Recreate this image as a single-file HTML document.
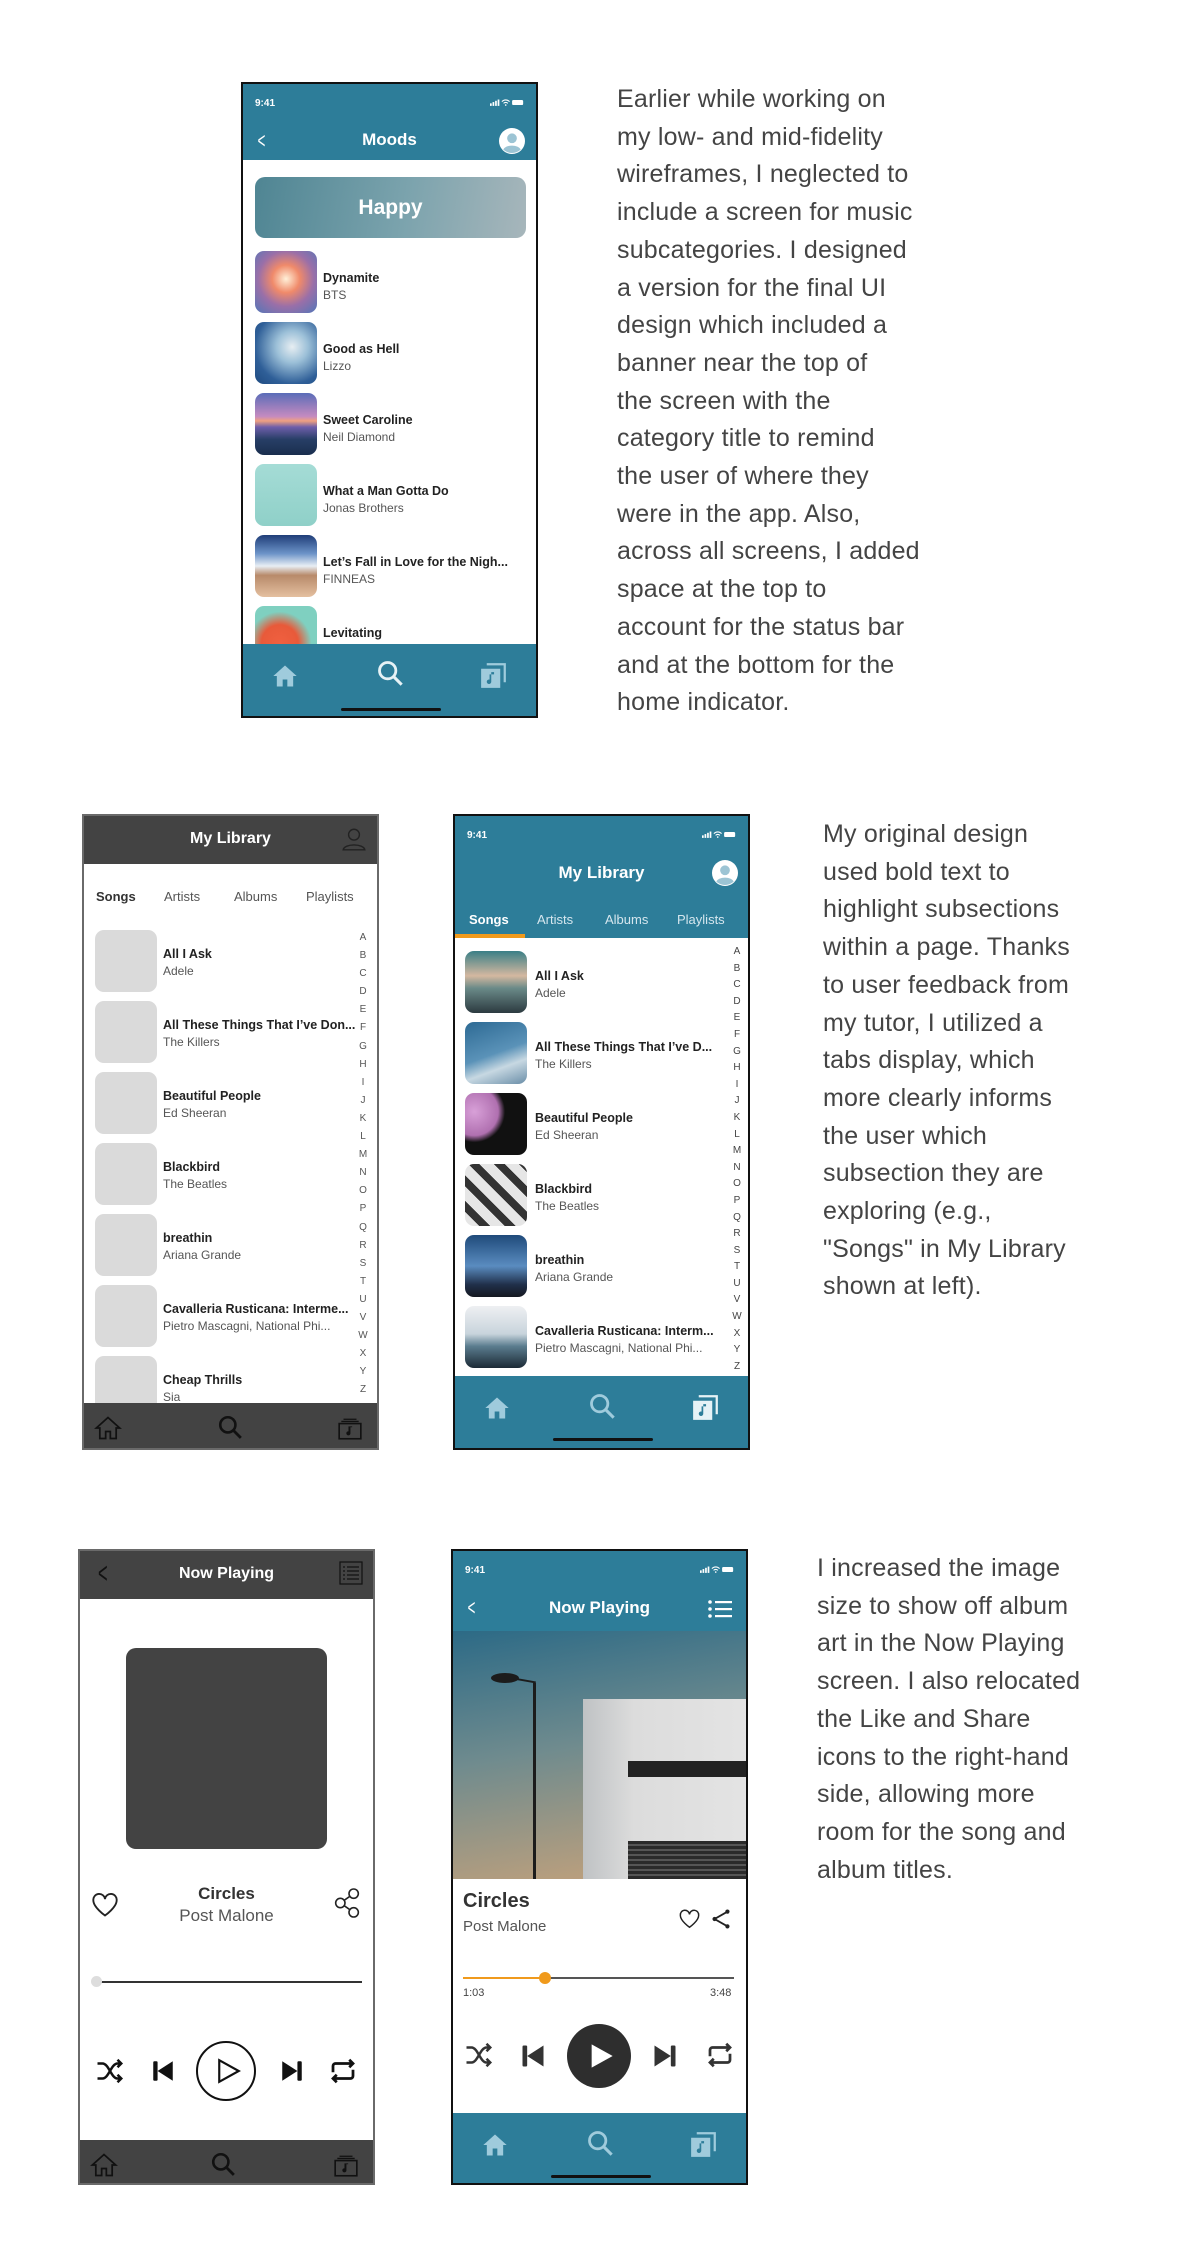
<!DOCTYPE html>
<html><head><meta charset="utf-8"><style>
*{margin:0;padding:0;box-sizing:border-box}
body{width:1200px;height:2264px;background:#fff;position:relative;font-family:"Liberation Sans",sans-serif;overflow:hidden}
.ph{position:absolute;width:297px;height:636px;overflow:hidden;background:#fff}
.hi{border:2px solid #111}
.wf{border:2px solid #6a6a6a}
.a{position:absolute}
.teal{background:#2d7d99}
.dark{background:#434343}
.st{font-size:10px;color:#fff;font-weight:bold}
.ttl{font-weight:bold;color:#fff;font-size:17px;text-align:center;width:100%}
.t1{font-weight:bold;font-size:12.5px;color:#222;white-space:nowrap}
.t2{font-size:12px;color:#555;white-space:nowrap;margin-top:3px}
.img{position:absolute;width:62px;height:62px;border-radius:9px}
.gimg{position:absolute;width:62px;height:62px;border-radius:9px;background:#dadada}
.txt{position:absolute;font-size:25px;line-height:37.7px;color:#444;letter-spacing:0.2px}
.alpha{position:absolute;font-size:10px;color:#555;text-align:center;width:12px}
.tab{position:absolute;font-size:13px}
</style></head><body>
<svg width="0" height="0" style="position:absolute">
<defs>
<symbol id="home" viewBox="0 0 24 24"><path d="M12 3L2 12h3v9h5v-6h4v6h5v-9h3z" fill="currentColor"/></symbol>
<symbol id="homeo" viewBox="0 0 24 24"><path d="M12 3L2 12h3v9h5v-6h4v6h5v-9h3z" fill="none" stroke="currentColor" stroke-width="1.5"/></symbol>
<symbol id="srch" viewBox="0 0 24 24"><circle cx="10" cy="10" r="7" fill="none" stroke="currentColor" stroke-width="2.4"/><path d="M15 15l7 7" stroke="currentColor" stroke-width="2.6"/></symbol>
<symbol id="lib" viewBox="0 0 24 24"><path d="M6 1h17v17h-2V3H6z" fill="currentColor"/><rect x="1" y="6" width="17" height="17" fill="currentColor"/><path d="M10 9v8.5a2 2 0 1 1-1.5-1.9V11h4V9z" fill="#2d7d99"/></symbol>
<symbol id="libo" viewBox="0 0 24 24"><rect x="2" y="7" width="20" height="14" fill="none" stroke="currentColor" stroke-width="1.5"/><path d="M4 5h16M6 3h12" stroke="currentColor" stroke-width="1.2"/><path d="M12 10v6a1.5 1.5 0 1 1-1-1.4V10h3" fill="currentColor" stroke="currentColor" stroke-width=".8"/></symbol>
<symbol id="user" viewBox="0 0 24 24"><circle cx="12" cy="12" r="12" fill="#fff"/><circle cx="12" cy="9.5" r="4.5" fill="#9cc4d4"/><path d="M4 20c2-5 14-5 16 0a12 12 0 0 1-16 0z" fill="#9cc4d4"/></symbol>
<symbol id="statr" viewBox="0 0 40 10"><rect x="0" y="6" width="2" height="3" fill="#fff"/><rect x="3" y="4.5" width="2" height="4.5" fill="#fff"/><rect x="6" y="3" width="2" height="6" fill="#fff"/><rect x="9" y="1.5" width="2" height="7.5" fill="#fff"/><path d="M14 4a6 6 0 0 1 9 0M16 6a3.5 3.5 0 0 1 5 0" stroke="#fff" stroke-width="1.3" fill="none"/><circle cx="18.5" cy="8" r="1" fill="#fff"/><rect x="26" y="2" width="13" height="6" rx="1.5" fill="#fff"/></symbol>
<symbol id="shuf" viewBox="0 0 24 24"><path d="M2 6h4c5 0 7 12 12 12h3M2 18h4c5 0 7-12 12-12h3M18 3l3 3-3 3M18 15l3 3-3 3" fill="none" stroke="currentColor" stroke-width="2"/></symbol>
<symbol id="prev" viewBox="0 0 24 24"><rect x="3" y="3" width="4" height="18" rx="1" fill="currentColor"/><path d="M21 3v18L7 12z" fill="currentColor"/></symbol>
<symbol id="next" viewBox="0 0 24 24"><rect x="17" y="3" width="4" height="18" rx="1" fill="currentColor"/><path d="M3 3v18l14-9z" fill="currentColor"/></symbol>
<symbol id="rep" viewBox="0 0 24 24"><path d="M4 13V8a2 2 0 0 1 2-2h14M20 11v5a2 2 0 0 1-2 2H4M17 3l3 3-3 3M7 15l-3 3 3 3" fill="none" stroke="currentColor" stroke-width="2.2"/></symbol>
<symbol id="heart" viewBox="0 0 24 24"><path d="M12 21S2 14 2 8a5 5 0 0 1 10-1 5 5 0 0 1 10 1c0 6-10 13-10 13z" fill="none" stroke="currentColor" stroke-width="1.6"/></symbol>
<symbol id="share" viewBox="0 0 24 24"><path d="M19 4L5 12l14 8" fill="none" stroke="currentColor" stroke-width="2"/><circle cx="19" cy="4" r="2.3" fill="currentColor"/><circle cx="5" cy="12" r="2.3" fill="currentColor"/><circle cx="19" cy="20" r="2.3" fill="currentColor"/></symbol>
<symbol id="shareo" viewBox="0 0 24 24"><path d="M17 5L7 12l10 7" fill="none" stroke="currentColor" stroke-width="1.2"/><circle cx="17" cy="5" r="3.5" fill="#fff" stroke="currentColor" stroke-width="1.2"/><circle cx="7" cy="12" r="3.5" fill="#fff" stroke="currentColor" stroke-width="1.2"/><circle cx="17" cy="19" r="3.5" fill="#fff" stroke="currentColor" stroke-width="1.2"/></symbol>
</defs></svg>

<!-- Phone 1 Moods -->
<div class="ph hi" style="left:241px;top:82px;height:636px">
 <div class="a teal" style="left:0;top:0;width:100%;height:76px"></div>
 <div class="a st" style="left:12px;top:14px">9:41</div>
 <svg class="a" style="right:12px;top:14px" width="34" height="9"><use href="#statr"/></svg>
 <div class="a ttl" style="top:46px;font-size:17px">Moods</div>
 <div class="a" style="left:12px;top:44px;color:#fff;font-size:22px;transform:scaleX(.6)">&lt;</div>
 <svg class="a" style="right:11px;top:44px" width="26" height="26"><use href="#user"/></svg>
 <div class="a" style="left:12px;top:93px;width:271px;height:61px;border-radius:10px;background:linear-gradient(100deg,#4f8593,#7ba3ad 55%,#a7b6bb);color:#fff;font-weight:bold;font-size:21px;text-align:center;line-height:61px">Happy</div>
 <div class="img" style="left:12px;top:167px;background:radial-gradient(circle at 50% 45%,#fff0d8,#f08a6a 30%,#9a6fa8 60%,#5276b8)"></div>
 <div class="a" style="left:80px;top:187px"><div class="t1">Dynamite</div><div class="t2">BTS</div></div>
 <div class="img" style="left:12px;top:238px;background:radial-gradient(circle at 60% 40%,#e7eef2,#9cc0d8 30%,#2f5f98 70%,#1e4a80)"></div>
 <div class="a" style="left:80px;top:258px"><div class="t1">Good as Hell</div><div class="t2">Lizzo</div></div>
 <div class="img" style="left:12px;top:309px;background:linear-gradient(#5a6cb8,#c58bc0 38%,#f0a080 45%,#6e5eaa 55%,#273e66 75%,#1a2e4e)"></div>
 <div class="a" style="left:80px;top:329px"><div class="t1">Sweet Caroline</div><div class="t2">Neil Diamond</div></div>
 <div class="img" style="left:12px;top:380px;background:linear-gradient(#a5dcd6,#8fd0c8)"></div>
 <div class="a" style="left:80px;top:400px"><div class="t1">What a Man Gotta Do</div><div class="t2">Jonas Brothers</div></div>
 <div class="img" style="left:12px;top:451px;background:linear-gradient(#1f3d78,#6c93c8 30%,#e8eef4 50%,#b88a6a 65%,#e4c0a0)"></div>
 <div class="a" style="left:80px;top:471px"><div class="t1">Let’s Fall in Love for the Nigh...</div><div class="t2">FINNEAS</div></div>
 <div class="img" style="left:12px;top:522px;background:radial-gradient(circle at 40% 60%,#f06040,#e85a3a 35%,#7fd0c0 60%)"></div>
 <div class="a" style="left:80px;top:542px"><div class="t1">Levitating</div><div class="t2">Dua Lipa</div></div>
 <div class="a teal" style="left:0;top:560px;width:100%;height:80px"></div>
 <svg class="a" style="left:28px;top:578px;color:#9fcbdc" width="28" height="28"><use href="#home"/></svg>
 <svg class="a" style="left:133px;top:575px;color:#e6f2f6" width="28" height="28"><use href="#srch"/></svg>
 <svg class="a" style="left:237px;top:578px;color:#9fcbdc" width="27" height="27"><use href="#lib"/></svg>
 <div class="a" style="left:98px;top:624px;width:100px;height:3px;border-radius:2px;background:#111"></div>
</div>
<div class="txt" style="left:617px;top:81px">Earlier while working on<br>my low- and mid-fidelity<br>wireframes, I neglected to<br>include a screen for music<br>subcategories. I designed<br>a version for the final UI<br>design which included a<br>banner near the top of<br>the screen with the<br>category title to remind<br>the user of where they<br>were in the app. Also,<br>across all screens, I added<br>space at the top to<br>account for the status bar<br>and at the bottom for the<br>home indicator.</div>

<!-- Phone 2 wireframe library -->
<div class="ph wf" style="left:82px;top:814px">
 <div class="a dark" style="left:0;top:0;width:100%;height:48px"></div>
 <div class="a ttl" style="top:14px;font-size:16px">My Library</div>
 <svg class="a" style="right:10px;top:10px" width="26" height="26" viewBox="0 0 24 24"><circle cx="12" cy="8" r="5" fill="none" stroke="#222" stroke-width="1.3"/><path d="M2 22c1-6 19-6 20 0z" fill="none" stroke="#222" stroke-width="1.3"/></svg>
 <div class="tab" style="left:12px;top:73px;font-weight:bold;color:#333">Songs</div>
 <div class="tab" style="left:80px;top:73px;color:#555">Artists</div>
 <div class="tab" style="left:150px;top:73px;color:#555">Albums</div>
 <div class="tab" style="left:222px;top:73px;color:#555">Playlists</div>
 <div class="gimg" style="left:11px;top:114px"></div><div class="a" style="left:79px;top:131px"><div class="t1">All I Ask</div><div class="t2">Adele</div></div>
 <div class="gimg" style="left:11px;top:185px"></div><div class="a" style="left:79px;top:202px"><div class="t1">All These Things That I’ve Don...</div><div class="t2">The Killers</div></div>
 <div class="gimg" style="left:11px;top:256px"></div><div class="a" style="left:79px;top:273px"><div class="t1">Beautiful People</div><div class="t2">Ed Sheeran</div></div>
 <div class="gimg" style="left:11px;top:327px"></div><div class="a" style="left:79px;top:344px"><div class="t1">Blackbird</div><div class="t2">The Beatles</div></div>
 <div class="gimg" style="left:11px;top:398px"></div><div class="a" style="left:79px;top:415px"><div class="t1">breathin</div><div class="t2">Ariana Grande</div></div>
 <div class="gimg" style="left:11px;top:469px"></div><div class="a" style="left:79px;top:486px"><div class="t1">Cavalleria Rusticana: Interme...</div><div class="t2">Pietro Mascagni, National Phi...</div></div>
 <div class="gimg" style="left:11px;top:540px"></div><div class="a" style="left:79px;top:557px"><div class="t1">Cheap Thrills</div><div class="t2">Sia</div></div>
 <div class="alpha" style="left:273px;top:113px;line-height:18.1px">A<br>B<br>C<br>D<br>E<br>F<br>G<br>H<br>I<br>J<br>K<br>L<br>M<br>N<br>O<br>P<br>Q<br>R<br>S<br>T<br>U<br>V<br>W<br>X<br>Y<br>Z</div>
 <div class="a dark" style="left:0;top:587px;width:100%;height:50px"></div>
 <svg class="a" style="left:10px;top:598px;color:#111" width="28" height="28"><use href="#homeo"/></svg>
 <svg class="a" style="left:133px;top:598px;color:#111" width="26" height="26"><use href="#srch"/></svg>
 <svg class="a" style="left:252px;top:600px;color:#111" width="28" height="26"><use href="#libo"/></svg>
</div>

<!-- Phone 3 hifi library -->
<div class="ph hi" style="left:453px;top:814px">
 <div class="a teal" style="left:0;top:0;width:100%;height:122px"></div>
 <div class="a st" style="left:12px;top:14px">9:41</div>
 <svg class="a" style="right:12px;top:14px" width="34" height="9"><use href="#statr"/></svg>
 <div class="a ttl" style="top:47px;font-size:17px">My Library</div>
 <svg class="a" style="right:10px;top:44px" width="26" height="26"><use href="#user"/></svg>
 <div class="tab" style="left:14px;top:96px;font-weight:bold;color:#fff">Songs</div>
 <div class="tab" style="left:82px;top:96px;color:#d5e6ee">Artists</div>
 <div class="tab" style="left:150px;top:96px;color:#d5e6ee">Albums</div>
 <div class="tab" style="left:222px;top:96px;color:#d5e6ee">Playlists</div>
 <div class="a" style="left:0;top:118px;width:70px;height:4px;background:#f09a1c"></div>
 <div class="img" style="left:10px;top:135px;background:linear-gradient(#3a7f86,#d4b8a0 40%,#6a8a88 60%,#2c3a40)"></div><div class="a" style="left:80px;top:153px"><div class="t1">All I Ask</div><div class="t2">Adele</div></div>
 <div class="img" style="left:10px;top:206px;background:linear-gradient(160deg,#2d6a94,#5a92b8 50%,#c7d8e2 70%,#6a8ea8)"></div><div class="a" style="left:80px;top:224px"><div class="t1">All These Things That I’ve D...</div><div class="t2">The Killers</div></div>
 <div class="img" style="left:10px;top:277px;background:radial-gradient(circle at 15% 30%,#d8a0d8,#b070b0 35%,#111 45%)"></div><div class="a" style="left:80px;top:295px"><div class="t1">Beautiful People</div><div class="t2">Ed Sheeran</div></div>
 <div class="img" style="left:10px;top:348px;background:repeating-linear-gradient(45deg,#e6e6e6 0 10px,#333 10px 18px)"></div><div class="a" style="left:80px;top:366px"><div class="t1">Blackbird</div><div class="t2">The Beatles</div></div>
 <div class="img" style="left:10px;top:419px;background:linear-gradient(#1f4a7a,#5a8cc0 50%,#20304a 80%,#151820)"></div><div class="a" style="left:80px;top:437px"><div class="t1">breathin</div><div class="t2">Ariana Grande</div></div>
 <div class="img" style="left:10px;top:490px;background:linear-gradient(#eef0f2,#c8d4dc 45%,#5a7c8e 65%,#1c2a36)"></div><div class="a" style="left:80px;top:508px"><div class="t1">Cavalleria Rusticana: Interm...</div><div class="t2">Pietro Mascagni, National Phi...</div></div>
 <div class="alpha" style="left:276px;top:128px;line-height:16.6px;color:#444">A<br>B<br>C<br>D<br>E<br>F<br>G<br>H<br>I<br>J<br>K<br>L<br>M<br>N<br>O<br>P<br>Q<br>R<br>S<br>T<br>U<br>V<br>W<br>X<br>Y<br>Z</div>
 <div class="a teal" style="left:0;top:560px;width:100%;height:80px"></div>
 <svg class="a" style="left:28px;top:578px;color:#9fcbdc" width="28" height="28"><use href="#home"/></svg>
 <svg class="a" style="left:133px;top:576px;color:#9fcbdc" width="28" height="28"><use href="#srch"/></svg>
 <svg class="a" style="left:237px;top:578px;color:#e6f2f6" width="27" height="27"><use href="#lib"/></svg>
 <div class="a" style="left:98px;top:622px;width:100px;height:3px;border-radius:2px;background:#111"></div>
</div>
<div class="txt" style="left:823px;top:816px">My original design<br>used bold text to<br>highlight subsections<br>within a page. Thanks<br>to user feedback from<br>my tutor, I utilized a<br>tabs display, which<br>more clearly informs<br>the user which<br>subsection they are<br>exploring (e.g.,<br>"Songs" in My Library<br>shown at left).</div>

<!-- Phone 4 wireframe now playing -->
<div class="ph wf" style="left:78px;top:1549px">
 <div class="a dark" style="left:0;top:0;width:100%;height:48px"></div>
 <div class="a ttl" style="top:14px;font-size:16px">Now Playing</div>
 <div class="a" style="left:14px;top:6px;color:#111;font-size:30px;transform:scaleX(.55)">&lt;</div>
 <svg class="a" style="right:10px;top:10px" width="24" height="24" viewBox="0 0 24 24"><rect x="1" y="1" width="22" height="22" fill="none" stroke="#111" stroke-width="1.2"/><path d="M4 6h2M4 10h2M4 14h2M4 18h2M8 6h12M8 10h12M8 14h12M8 18h12" stroke="#111" stroke-width="1.2"/></svg>
 <div class="a" style="left:46px;top:97px;width:201px;height:201px;border-radius:10px;background:#434343"></div>
 <div class="a" style="left:0;top:333px;width:100%;text-align:center;font-weight:bold;font-size:17px;color:#333">Circles</div>
 <div class="a" style="left:0;top:355px;width:100%;text-align:center;font-size:17px;color:#555">Post Malone</div>
 <svg class="a" style="left:10px;top:340px;color:#222" width="30" height="28"><use href="#heart"/></svg>
 <svg class="a" style="left:251px;top:336px;color:#222" width="32" height="32"><use href="#shareo"/></svg>
 <div class="a" style="left:16px;top:430px;width:266px;height:2px;background:#333"></div>
 <div class="a" style="left:11px;top:425px;width:11px;height:11px;border-radius:50%;background:#ddd"></div>
 <svg class="a" style="left:14px;top:505px;color:#111" width="32" height="30"><use href="#shuf"/></svg>
 <svg class="a" style="left:70px;top:506px;color:#111" width="26" height="28"><use href="#prev"/></svg>
 <div class="a" style="left:116px;top:490px;width:60px;height:60px;border-radius:50%;border:2.5px solid #111"></div>
 <svg class="a" style="left:136px;top:507px" width="26" height="26" viewBox="0 0 24 24"><path d="M3 2v20l18-10z" fill="none" stroke="#111" stroke-width="2"/></svg>
 <svg class="a" style="left:199px;top:506px;color:#111" width="26" height="28"><use href="#next"/></svg>
 <svg class="a" style="left:248px;top:505px;color:#111" width="30" height="30"><use href="#rep"/></svg>
 <div class="a dark" style="left:0;top:589px;width:100%;height:50px"></div>
 <svg class="a" style="left:10px;top:600px;color:#111" width="28" height="28"><use href="#homeo"/></svg>
 <svg class="a" style="left:130px;top:600px;color:#111" width="26" height="26"><use href="#srch"/></svg>
 <svg class="a" style="left:252px;top:602px;color:#111" width="28" height="26"><use href="#libo"/></svg>
</div>

<!-- Phone 5 hifi now playing -->
<div class="ph hi" style="left:451px;top:1549px">
 <div class="a teal" style="left:0;top:0;width:100%;height:80px"></div>
 <div class="a st" style="left:12px;top:14px">9:41</div>
 <svg class="a" style="right:12px;top:14px" width="34" height="9"><use href="#statr"/></svg>
 <div class="a ttl" style="top:47px;font-size:17px">Now Playing</div>
 <div class="a" style="left:12px;top:44px;color:#fff;font-size:22px;transform:scaleX(.6)">&lt;</div>
 <svg class="a" style="right:14px;top:48px" width="24" height="20" viewBox="0 0 24 20"><g fill="#fff"><circle cx="2" cy="3" r="1.8"/><circle cx="2" cy="10" r="1.8"/><circle cx="2" cy="17" r="1.8"/><rect x="7" y="2" width="17" height="2.2"/><rect x="7" y="9" width="17" height="2.2"/><rect x="7" y="16" width="17" height="2.2"/></g></svg>
 <div class="a" style="left:0;top:80px;width:100%;height:248px;background:linear-gradient(170deg,#2c6a86,#6f8b8e 45%,#c9a37a)"></div>
 <div class="a" style="left:130px;top:148px;width:170px;height:180px;background:linear-gradient(90deg,#bfc2c4,#dcdcdc 30%,#e4e4e4)"></div>
 <div class="a" style="left:175px;top:210px;width:125px;height:16px;background:#222"></div>
 <div class="a" style="left:175px;top:290px;width:125px;height:38px;background:repeating-linear-gradient(#2a2a2a 0 3px,#555 3px 5px)"></div>
 <div class="a" style="left:80px;top:132px;width:3px;height:196px;background:#1c1c1c"></div>
 <div class="a" style="left:38px;top:122px;width:28px;height:10px;border-radius:50%;background:#1c1c1c"></div>
 <div class="a" style="left:55px;top:128px;width:28px;height:2px;background:#1c1c1c;transform:rotate(10deg)"></div>
 <div class="a" style="left:10px;top:339px;font-weight:bold;font-size:20px;color:#333">Circles</div>
 <div class="a" style="left:10px;top:367px;font-size:15px;color:#555">Post Malone</div>
 <svg class="a" style="left:225px;top:357px;color:#222" width="23" height="22"><use href="#heart"/></svg>
 <svg class="a" style="left:257px;top:357px;color:#222" width="22" height="22"><use href="#share"/></svg>
 <div class="a" style="left:10px;top:426px;width:82px;height:2px;background:#f09a1c"></div>
 <div class="a" style="left:92px;top:426px;width:189px;height:2px;background:#555"></div>
 <div class="a" style="left:86px;top:421px;width:12px;height:12px;border-radius:50%;background:#f09a1c"></div>
 <div class="a" style="left:10px;top:436px;font-size:11px;color:#444">1:03</div>
 <div class="a" style="left:257px;top:436px;font-size:11px;color:#444">3:48</div>
 <svg class="a" style="left:10px;top:489px;color:#333" width="32" height="30"><use href="#shuf"/></svg>
 <svg class="a" style="left:66px;top:490px;color:#333" width="28" height="30"><use href="#prev"/></svg>
 <div class="a" style="left:114px;top:473px;width:64px;height:64px;border-radius:50%;background:#2e2e2e"></div>
 <svg class="a" style="left:134px;top:491px" width="28" height="28" viewBox="0 0 24 24"><path d="M4 2v20l18-10z" fill="#fff"/></svg>
 <svg class="a" style="left:198px;top:490px;color:#333" width="28" height="30"><use href="#next"/></svg>
 <svg class="a" style="left:252px;top:489px;color:#333" width="30" height="30"><use href="#rep"/></svg>
 <div class="a teal" style="left:0;top:562px;width:100%;height:80px"></div>
 <svg class="a" style="left:28px;top:580px;color:#9fcbdc" width="28" height="28"><use href="#home"/></svg>
 <svg class="a" style="left:133px;top:578px;color:#9fcbdc" width="28" height="28"><use href="#srch"/></svg>
 <svg class="a" style="left:237px;top:580px;color:#9fcbdc" width="27" height="27"><use href="#lib"/></svg>
 <div class="a" style="left:98px;top:624px;width:100px;height:3px;border-radius:2px;background:#111"></div>
</div>
<div class="txt" style="left:817px;top:1550px">I increased the image<br>size to show off album<br>art in the Now Playing<br>screen. I also relocated<br>the Like and Share<br>icons to the right-hand<br>side, allowing more<br>room for the song and<br>album titles.</div>
</body></html>
